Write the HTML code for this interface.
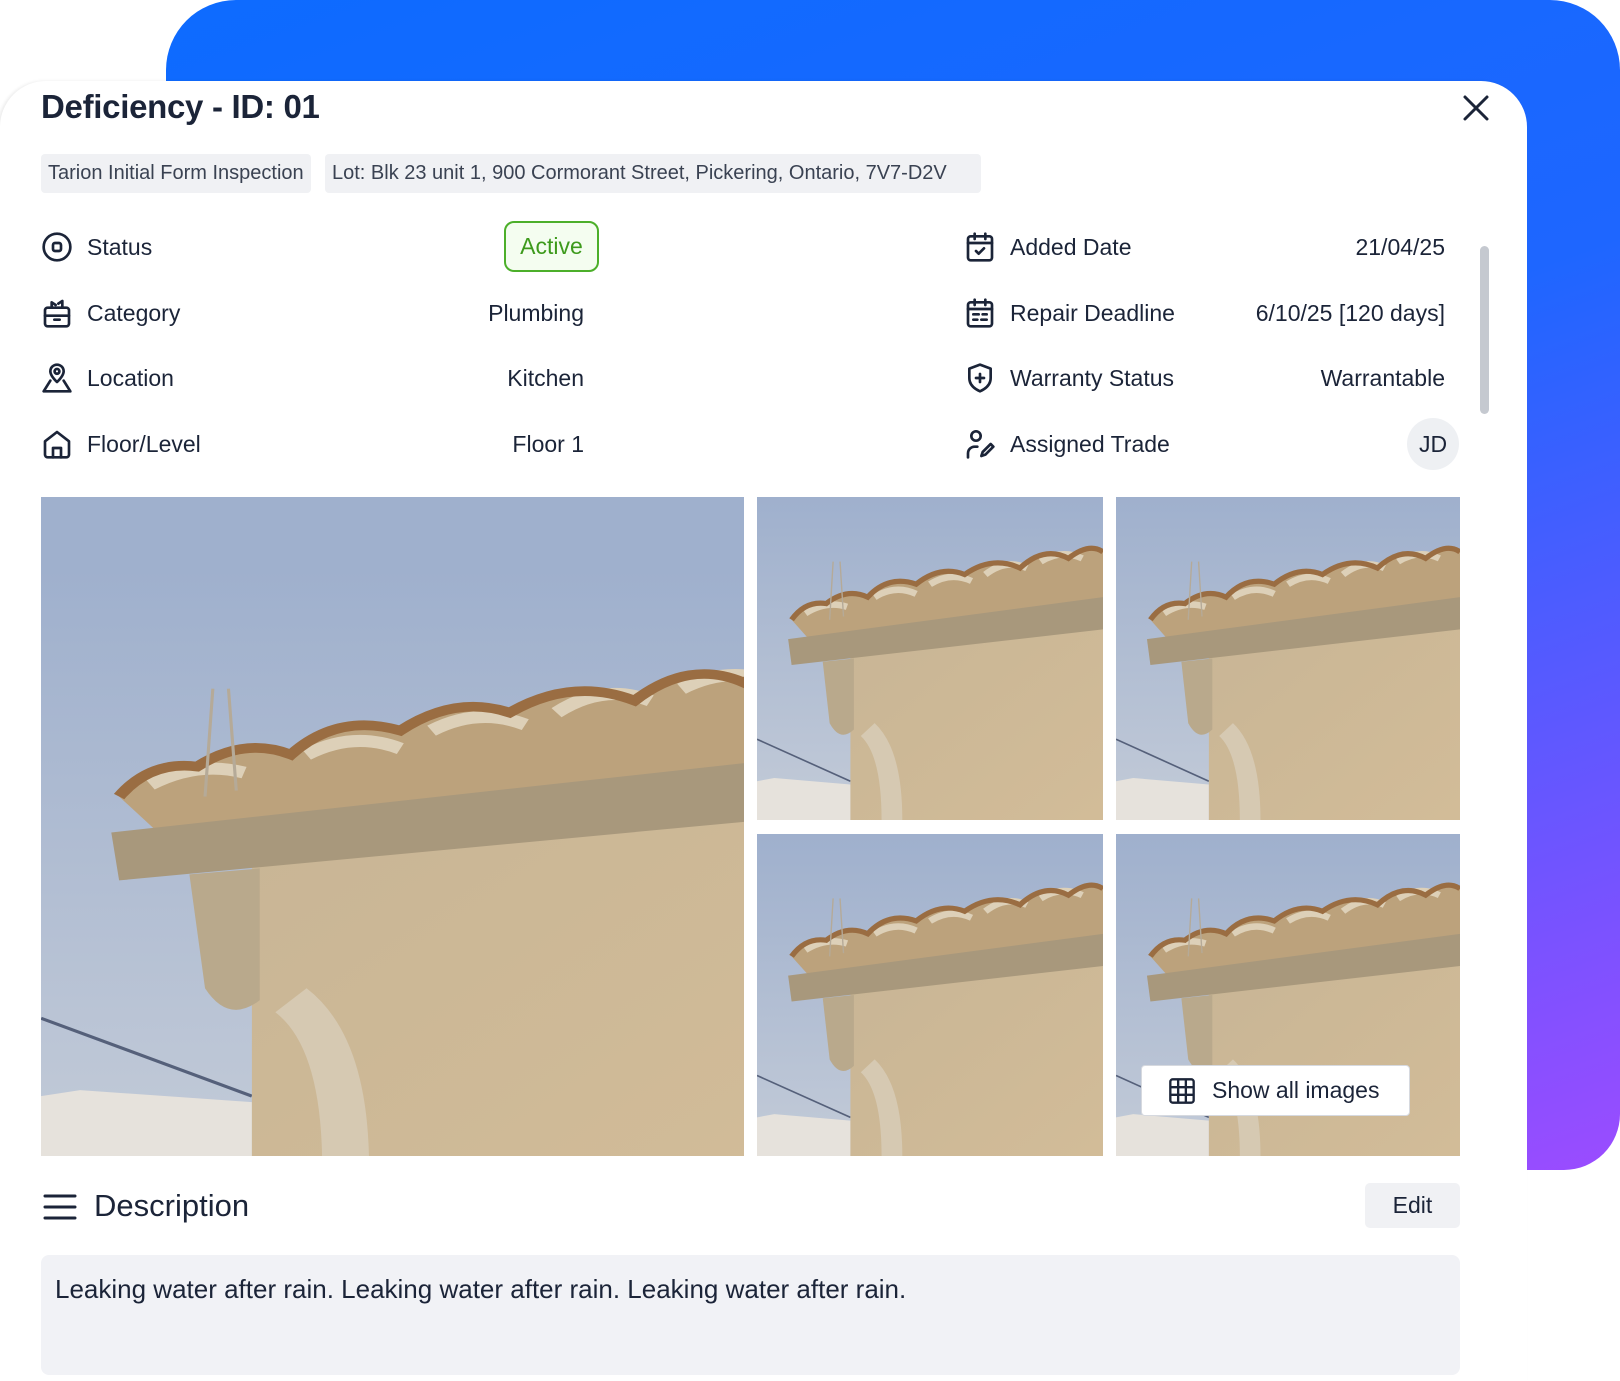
<!DOCTYPE html>
<html><head><meta charset="utf-8"><style>
*{margin:0;padding:0;box-sizing:border-box}
body{width:1620px;height:1320px;background:#fff;position:relative;overflow:hidden;font-family:"Liberation Sans",sans-serif;color:#1b2438}
.bg{position:absolute;left:166px;top:0;width:1454px;height:1170px;border-radius:70px 70px 56px 0;background:linear-gradient(160deg,#0d6bff 0%,#1e66ff 45%,#7a52ff 85%,#9b4cff 100%)}
.card{position:absolute;left:0;top:81px;width:1527px;height:1300px;background:#fff;border-radius:46px 46px 0 0;box-shadow:-2px 0 3px rgba(0,0,0,.08)}
.abs{position:absolute}
h1{position:absolute;left:41px;top:88px;font-size:33px;font-weight:bold;letter-spacing:-0.3px}
.chip{position:absolute;top:154px;height:39px;background:#f0f1f4;border-radius:4px;font-size:20px;line-height:39px;padding:0 7px;color:#3a4252}
.lbl{position:absolute;font-size:23px;line-height:28px}
.val{position:absolute;font-size:23px;line-height:28px;text-align:right}
.ic{position:absolute;width:32px;height:32px}
.ic svg{width:32px;height:32px;fill:none;stroke:#1b2438;stroke-width:2;stroke-linecap:round;stroke-linejoin:round}
.ph{position:absolute;overflow:hidden;background:#9fb0cd}
.ph svg{width:100%;height:100%;display:block}
</style></head><body>
<div class="bg"></div>
<div class="card"></div>
<h1>Deficiency - ID: 01</h1>
<svg class="abs" style="left:1462px;top:94px" width="28" height="28" viewBox="0 0 28 28"><path d="M3 3L25 25M25 3L3 25" stroke="#1b2438" stroke-width="3" stroke-linecap="round"/></svg>
<div class="chip" style="left:41px;width:270px">Tarion Initial Form Inspection</div>
<div class="chip" style="left:325px;width:656px">Lot: Blk 23 unit 1, 900 Cormorant Street, Pickering, Ontario, 7V7-D2V</div>

<div class="ic" style="left:41px;top:231px"><svg viewBox="0 0 24 24"><circle cx="12" cy="12" r="10"/><rect x="9" y="9" width="6" height="6" rx="1.5"/></svg></div>
<div class="lbl" style="left:87px;top:233px">Status</div>
<div class="abs" style="left:504px;top:221px;width:95px;height:51px;border:2px solid #4caf2a;border-radius:10px;background:#f4fdf0;color:#3d9a1c;font-size:23px;line-height:47px;text-align:center">Active</div>

<div class="ic" style="left:41px;top:297px"><svg viewBox="0 0 24 24"><rect x="3" y="8" width="18" height="14" rx="2"/><path d="M3 14h18M10 17h4M8 8V4l3 2M16 8V3l-3 2"/></svg></div>
<div class="lbl" style="left:87px;top:299px">Category</div>
<div class="val" style="right:1036px;top:299px">Plumbing</div>

<div class="ic" style="left:41px;top:362px"><svg viewBox="0 0 24 24"><path d="M12 15s-5-4.5-5-8a5 5 0 0 1 10 0c0 3.5-5 8-5 8z"/><circle cx="12" cy="7" r="1.8"/><path d="M7 14l-5 8h20l-5-8"/></svg></div>
<div class="lbl" style="left:87px;top:364px">Location</div>
<div class="val" style="right:1036px;top:364px">Kitchen</div>

<div class="ic" style="left:41px;top:428px"><svg viewBox="0 0 24 24"><path d="M3 10l9-7 9 7v10a2 2 0 0 1-2 2H5a2 2 0 0 1-2-2z"/><path d="M9 22v-7h6v7"/></svg></div>
<div class="lbl" style="left:87px;top:430px">Floor/Level</div>
<div class="val" style="right:1036px;top:430px">Floor 1</div>

<div class="ic" style="left:964px;top:231px"><svg viewBox="0 0 24 24"><rect x="3" y="4" width="18" height="18" rx="2"/><path d="M3 9h18M8 2v4M16 2v4M9 15l2 2 4-4"/></svg></div>
<div class="lbl" style="left:1010px;top:233px">Added Date</div>
<div class="val" style="right:175px;top:233px">21/04/25</div>

<div class="ic" style="left:964px;top:297px"><svg viewBox="0 0 24 24"><rect x="3" y="4" width="18" height="18" rx="2"/><path d="M3 9h18M8 2v4M16 2v4M7 13h4M14 13h3M7 17h3M13 17h4"/></svg></div>
<div class="lbl" style="left:1010px;top:299px">Repair Deadline</div>
<div class="val" style="right:175px;top:299px">6/10/25 [120 days]</div>

<div class="ic" style="left:964px;top:362px"><svg viewBox="0 0 24 24"><path d="M12 2l8 3v7c0 5-3.5 8-8 10-4.5-2-8-5-8-10V5z"/><path d="M12 9v6M9 12h6"/></svg></div>
<div class="lbl" style="left:1010px;top:364px">Warranty Status</div>
<div class="val" style="right:175px;top:364px">Warrantable</div>

<div class="ic" style="left:964px;top:428px"><svg viewBox="0 0 24 24"><circle cx="9" cy="6" r="3.5"/><path d="M3 22v-3a5 5 0 0 1 5-5h2"/><path d="M13 21l1-3 6-6 2 2-6 6z"/></svg></div>
<div class="lbl" style="left:1010px;top:430px">Assigned Trade</div>
<div class="abs" style="left:1407px;top:418px;width:52px;height:52px;border-radius:50%;background:#eef0f3;font-size:23px;line-height:52px;text-align:center">JD</div>

<div class="abs" style="left:1480px;top:246px;width:9px;height:168px;border-radius:5px;background:#c5c9d0"></div>

<svg width="0" height="0" style="position:absolute"><defs>
<linearGradient id="sky" x1="0" y1="0" x2="0" y2="1"><stop offset="0" stop-color="#9fb0cd"/><stop offset="1" stop-color="#c3cbd8"/></linearGradient>
<linearGradient id="wall" x1="0" y1="0" x2="1" y2="1"><stop offset="0" stop-color="#c8b595"/><stop offset="1" stop-color="#d2bc98"/></linearGradient>
<symbol id="photo" viewBox="0 0 100 100" preserveAspectRatio="none">
<rect width="100" height="100" fill="url(#sky)"/>
<path d="M0 88L5 87L27 89V100H0z" fill="#e6e2dc"/>
<path d="M0 75L27 88" stroke="#55607a" stroke-width=".5"/>
<path d="M27 48L100 36V100H27z" fill="url(#wall)"/>
<path d="M10 38Q14 32 20 33Q26 28 32 31Q38 24 46 27Q53 21 60 24Q68 18 76 22Q83 15 90 19Q96 14 100 17V34L15 44z" fill="#bca27c"/>
<path d="M14 36Q20 32 26 34M34 31Q40 27 46 30M50 27Q56 23 62 26M66 24Q72 19 78 22M82 20Q88 16 94 19" stroke="#ddd0b8" stroke-width="2" fill="none"/>
<path d="M10 38Q14 32 20 33Q26 28 32 31Q38 24 46 27Q53 21 60 24Q68 18 76 22Q83 15 90 19Q96 14 100 17" fill="none" stroke="#9a6d42" stroke-width="1.6"/>
<path d="M9 44L100 31V41L10 52z" fill="#a8987c"/>
<path d="M19 51L28 50V72Q24 76 21 70z" fill="#b9a98c"/>
<path d="M34 70Q42 78 42 100H36Q36 80 30 74z" fill="#d6c9b2"/>
<path d="M21 38L22 20M25 37L24 20" stroke="#b5aa98" stroke-width=".4"/>
</symbol></defs></svg>

<div class="ph" style="left:41px;top:497px;width:703px;height:659px"><svg viewBox="0 -12 90 110" preserveAspectRatio="none"><use href="#photo" width="100" height="100"/></svg></div>
<div class="ph" style="left:757px;top:497px;width:346px;height:323px"><svg><use href="#photo" width="100%" height="100%"/></svg></div>
<div class="ph" style="left:1116px;top:497px;width:344px;height:323px"><svg><use href="#photo" width="100%" height="100%"/></svg></div>
<div class="ph" style="left:757px;top:834px;width:346px;height:322px"><svg><use href="#photo" width="100%" height="100%"/></svg></div>
<div class="ph" style="left:1116px;top:834px;width:344px;height:322px"><svg><use href="#photo" width="100%" height="100%"/></svg></div>

<div class="abs" style="left:1141px;top:1065px;width:269px;height:51px;background:#fff;border:1px solid #d6d9df;border-radius:4px;font-size:23px;line-height:49px;padding-left:70px">Show all images</div>
<svg class="abs" style="left:1168px;top:1077px" width="28" height="28" viewBox="0 0 24 24" fill="none" stroke="#1b2438" stroke-width="2"><rect x="2" y="2" width="20" height="20" rx="2"/><path d="M2 8.7h20M2 15.3h20M8.7 2v20M15.3 2v20"/></svg>

<svg class="abs" style="left:43px;top:1192px" width="34" height="30" viewBox="0 0 34 30" stroke="#1b2438" stroke-width="3" stroke-linecap="round"><path d="M2 4h30M2 15h30M2 26h30"/></svg>
<div class="abs" style="left:94px;top:1188px;font-size:31px">Description</div>
<div class="abs" style="left:1365px;top:1183px;width:95px;height:45px;background:#f0f1f4;border-radius:5px;font-size:23px;line-height:45px;text-align:center">Edit</div>

<div class="abs" style="left:41px;top:1255px;width:1419px;height:120px;background:#f1f2f6;border-radius:8px"></div>
<div class="abs" style="left:55px;top:1274px;font-size:26px">Leaking water after rain. Leaking water after rain. Leaking water after rain.</div>
</body></html>
